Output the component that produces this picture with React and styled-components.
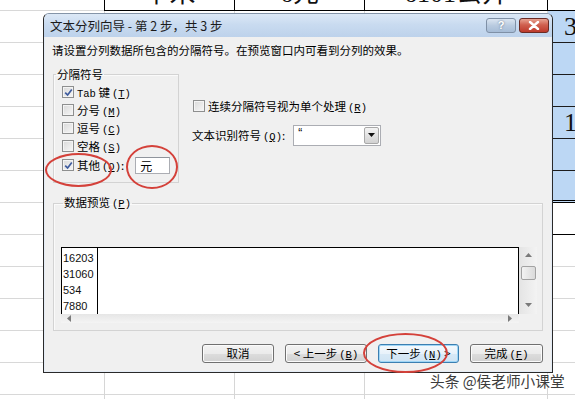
import React from 'react';
import styled, { createGlobalStyle } from 'styled-components';

const UI = '"Noto Sans CJK SC", "Liberation Sans", sans-serif';
const SERIF = '"Liberation Serif", "Noto Sans CJK SC", serif';
const MONO = '"Liberation Mono", "DejaVu Sans Mono", monospace';

const GlobalStyle = createGlobalStyle`
  html, body { margin: 0; padding: 0; background: #fff; }
  body { font-family: ${UI}; }
`;

const sheetCols = [
  { w: 105 },
  { w: 130, text: '平米' },
  { w: 130, text: '6元' },
  { w: 183, text: '6101公开' },
];

const previewRows = ['16203', '31060', '534', '7880'];

const delimiters = [
  { latin: 'Tab', label: ' 键', key: 'T', checked: true },
  { label: '分号', key: 'M' },
  { label: '逗号', key: 'C' },
  { label: '空格', key: 'S' },
];

// access key in parentheses, SimSun-like half width
const Key = ({ k }) => (
  <KeyText>(<u>{k}</u>)</KeyText>
);

const Check = ({ checked }) => (
  <Box>
    {checked && (
      <svg width="9" height="9" viewBox="0 0 9 9">
        <path d="M1.2 4.6 L3.6 7 L7.8 1.4" fill="none" stroke="#3f5c9e" strokeWidth="1.7" />
      </svg>
    )}
  </Box>
);

const Arrow = ({ dir, color = '#7a7a7a' }) => {
  const horiz = dir === 'left' || dir === 'right';
  const pts = {
    up: '0,4 3.5,0 7,4',
    down: '0,0 3.5,4 7,0',
    left: '4,0 0,3.5 4,7',
    right: '0,0 4,3.5 0,7',
  }[dir];
  return (
    <svg width={horiz ? 4 : 7} height={horiz ? 7 : 4}>
      <polygon points={pts} fill={color} />
    </svg>
  );
};

const App = () => (
  <Sheet>
    <GlobalStyle />
    {sheetCols.map((c, i) => (
      <Col key={i} $w={c.w}>
        <Cap $table={!!c.text}>{c.text && <CapText>{c.text}</CapText>}</Cap>
      </Col>
    ))}
    <Col>
      <Cap $table />
      {[0, 1, 2, 3, 4, 5].map((r) => (
        <BlueCell key={r} $last={r === 5}>{r === 0 ? '3' : r === 3 ? '1' : ''}</BlueCell>
      ))}
      <WhiteCell />
    </Col>

    <Dialog>
      <TitleBar>
        <Title>文本分列向导 - 第 2 步，共 3 步</Title>
        <CaptionButtons>
          <HelpButton>?</HelpButton>
          <CloseButton>
            <svg width="12" height="9" viewBox="0 0 12 9">
              <path d="M2 1 L10 8 M10 1 L2 8" stroke="#fff" strokeWidth="2.4" strokeLinecap="round" />
            </svg>
          </CloseButton>
        </CaptionButtons>
      </TitleBar>

      <Body>
        <Instruction>请设置分列数据所包含的分隔符号。在预览窗口内可看到分列的效果。</Instruction>

        <OptionsRow>
          <DelimGroup>
            <Legend>分隔符号</Legend>
            <GroupInner>
              {delimiters.map((d) => (
                <CheckRow key={d.key}>
                  <Check checked={d.checked} />
                  <span>{d.latin && <Latin>{d.latin}</Latin>}{d.label}<Key k={d.key} /></span>
                </CheckRow>
              ))}
              <CheckRow $tall>
                <Check checked />
                <span>其他<Key k="O" />:</span>
                <TextField>元</TextField>
              </CheckRow>
            </GroupInner>
          </DelimGroup>

          <SideOptions>
            <CheckRow>
              <Check />
              <span>连续分隔符号视为单个处理<Key k="R" /></span>
            </CheckRow>
            <QualifierRow>
              <span>文本识别符号<Key k="Q" />:</span>
              <Combo>
                <ComboValue>“</ComboValue>
                <ComboButton><Arrow dir="down" color="#111" /></ComboButton>
              </Combo>
            </QualifierRow>
          </SideOptions>
        </OptionsRow>

        <PreviewGroup>
          <Legend>数据预览<Key k="P" /></Legend>
          <PreviewFrame>
            <PreviewTop>
              <DataGrid>
                <DataCol>
                  {previewRows.map((v) => (
                    <DataCell key={v}>{v}</DataCell>
                  ))}
                </DataCol>
              </DataGrid>
              <VScroll>
                <ArrowCell><Arrow dir="up" /></ArrowCell>
                <Thumb />
                <ArrowCell $end><Arrow dir="down" /></ArrowCell>
              </VScroll>
            </PreviewTop>
            <PreviewBottom>
              <HScroll>
                <Arrow dir="left" />
                <Arrow dir="right" />
              </HScroll>
              <Corner />
            </PreviewBottom>
          </PreviewFrame>
        </PreviewGroup>

        <ButtonRow>
          <Button $w={72}>取消</Button>
          <Button $w={82}>&lt; 上一步<Key k="B" /></Button>
          <Button $w={81} $default>下一步<Key k="N" /> &gt;</Button>
          <Button $w={73}>完成<Key k="F" /></Button>
        </ButtonRow>
      </Body>
    </Dialog>

    <Ring $x={45} $y={153} $w={67} $h={34} />
    <Ring $x={126} $y={145} $w={52} $h={44} />
    <Ring $x={363} $y={333} $w={85} $h={40} />

    <Watermark>头条 @侯老师小课堂</Watermark>
  </Sheet>
);

const Sheet = styled.div`
  position: relative;
  width: 575px;
  height: 399px;
  overflow: hidden;
  display: flex;
  background: #fff;
`;

const Col = styled.div`
  box-sizing: border-box;
  flex: ${(p) => (p.$w ? `0 0 ${p.$w}px` : '1 1 auto')};
  height: 100%;
  border-right: 1px solid #d6d6d6;
  display: flex;
  flex-direction: column;
  background: repeating-linear-gradient(to bottom, transparent 0 31px, #d8d8d8 31px 32px);
  background-position: 0 11px;
`;

const Cap = styled.div`
  box-sizing: border-box;
  height: 11px;
  flex: none;
  overflow: hidden;
  background: #fff;
  border-bottom: 1px solid ${(p) => (p.$table ? '#000' : '#d8d8d8')};
  border-left: ${(p) => (p.$table ? '1px solid #000' : 'none')};
  margin-left: ${(p) => (p.$table ? '-1px' : '0')};
  text-align: center;
`;

const CapText = styled.span`
  display: block;
  margin-top: -19px;
  font: 26px/26px ${SERIF};
  color: #111;
`;

const BlueCell = styled.div`
  box-sizing: border-box;
  height: 32px;
  flex: none;
  background: #bcd7f4;
  border-bottom: ${(p) => (p.$last ? '3px double #000' : '1px solid #1c1c1c')};
  padding-left: 16px;
  font: 26px/32px ${SERIF};
  color: #111;
`;

const WhiteCell = styled.div`
  box-sizing: border-box;
  height: 32px;
  flex: none;
  background: #fff;
  border-bottom: 1px solid #000;
`;

const Dialog = styled.div`
  position: absolute;
  left: 43px;
  top: 13px;
  width: 510px;
  height: 360px;
  box-sizing: border-box;
  border: 1px solid #2a2a2a;
  border-top-color: #8494a8;
  border-radius: 6px 6px 0 0;
  background: #f0f0f0;
  box-shadow: inset 0 0 0 1px #e4ecf6;
  display: flex;
  flex-direction: column;
  font-family: ${UI};
  font-size: 11.5px;
  color: #000;
  overflow: hidden;
`;

const TitleBar = styled.div`
  height: 23px;
  flex: none;
  display: flex;
  align-items: flex-start;
  justify-content: space-between;
  padding: 0 3px 0 6px;
  background: linear-gradient(#dce8f6, #c9dbf0 45%, #bdd2eb);
  border-radius: 5px 5px 0 0;
`;

const Title = styled.span`
  font-size: 12.5px;
  line-height: 23px;
  color: #1b1b1b;
`;

const CaptionButtons = styled.div`
  display: flex;
  gap: 3px;
  padding-top: 4px;
`;

const CaptionButton = styled.div`
  width: 30px;
  height: 15px;
  box-sizing: border-box;
  border-radius: 3px;
  display: flex;
  align-items: center;
  justify-content: center;
`;

const HelpButton = styled(CaptionButton)`
  border: 1px solid #7f90a6;
  background: linear-gradient(#dbe5f1, #b9cbe0 50%, #a6bcd6);
  color: #fff;
  font: bold 11px/13px "Liberation Sans", sans-serif;
  text-shadow: 0 0 2px #55657a;
`;

const CloseButton = styled(CaptionButton)`
  border: 1px solid #6b2b24;
  background: linear-gradient(#e8a392, #d0604f 45%, #bd3a2c);
`;

const Body = styled.div`
  flex: 1;
  display: flex;
  flex-direction: column;
  padding: 6px 9px 0 9px;
`;

const Instruction = styled.div`
  line-height: 14px;
  margin-left: -1px;
`;

const Latin = styled.span`
  font-family: ${MONO};
  font-size: 10.5px;
`;

const KeyText = styled.span`
  font-family: ${MONO};
  font-size: 10.5px;
  margin-left: 2px;
`;

const OptionsRow = styled.div`
  display: flex;
  align-items: flex-start;
  margin-top: 10px;
`;

const Group = styled.fieldset`
  margin: 0;
  padding: 0;
  min-width: 0;
  box-sizing: border-box;
  border: 1px solid #d3d3d3;
  box-shadow: inset 1px 1px 0 #fafafa;
`;

const Legend = styled.legend`
  padding: 0 1px;
  margin-left: 2px;
  line-height: 14px;
`;

const DelimGroup = styled(Group)`
  width: 126px;
  flex: none;
`;

const GroupInner = styled.div`
  padding: 2px 0 7px 8px;
`;

const CheckRow = styled.div`
  height: ${(p) => (p.$tall ? '20px' : '18px')};
  display: flex;
  align-items: center;
  gap: 3px;
  white-space: nowrap;
`;

const Box = styled.span`
  width: 12px;
  height: 12px;
  box-sizing: border-box;
  flex: none;
  border: 1px solid #8e8f8f;
  background: linear-gradient(135deg, #d9d9d9, #f7f7f7);
  box-shadow: inset 0 0 0 1px #f4f4f4;
  display: inline-flex;
  align-items: center;
  justify-content: center;
`;

const TextField = styled.span`
  width: 35px;
  height: 17px;
  box-sizing: border-box;
  margin-left: 8px;
  border: 1px solid #abadb3;
  border-top-color: #8f949c;
  background: #fff;
  padding-left: 4px;
  font-size: 12px;
  line-height: 15px;
`;

const SideOptions = styled.div`
  margin-left: 14px;
  padding-top: 30px;
  display: flex;
  flex-direction: column;
  gap: 9px;
`;

const QualifierRow = styled.div`
  display: flex;
  align-items: center;
  height: 22px;
  margin-left: -1px;
`;

const Combo = styled.div`
  width: 88px;
  height: 21px;
  box-sizing: border-box;
  margin-left: 8px;
  border: 1px solid #abadb3;
  background: #fff;
  display: flex;
  justify-content: space-between;
`;

const ComboValue = styled.span`
  padding-left: 4px;
  font: 12px/14px "Liberation Sans", sans-serif;
`;

const ComboButton = styled.span`
  width: 15px;
  margin: 1px;
  box-sizing: border-box;
  border: 1px solid #a8a8a8;
  border-radius: 2px;
  background: linear-gradient(#f4f4f4, #e2e2e2 50%, #d2d2d2);
  display: flex;
  align-items: center;
  justify-content: center;
`;

const PreviewGroup = styled(Group)`
  width: 490px;
  margin-top: 12px;
  padding: 36px 0 7px 7px;
`;

const PreviewFrame = styled.div`
  width: 476px;
  height: 76px;
  display: flex;
  flex-direction: column;
`;

const PreviewTop = styled.div`
  flex: 1;
  display: flex;
`;

const DataGrid = styled.div`
  flex: 1;
  box-sizing: border-box;
  background: #fff;
  border: 1px solid #000;
  border-bottom: none;
  display: flex;
  overflow: hidden;
`;

const DataCol = styled.div`
  width: 36px;
  box-sizing: border-box;
  border-right: 1px solid #000;
  padding: 2px 0 0 1px;
`;

const DataCell = styled.div`
  font: 11px/16px "Liberation Sans", sans-serif;
  color: #111;
`;

const VScroll = styled.div`
  width: 18px;
  display: flex;
  flex-direction: column;
  align-items: center;
  background: linear-gradient(to right, #e4e4e4, #f3f3f3);
`;

const ArrowCell = styled.div`
  height: 16px;
  display: flex;
  align-items: center;
  justify-content: center;
  margin-top: ${(p) => (p.$end ? 'auto' : '0')};
  padding-bottom: ${(p) => (p.$end ? '1px' : '0')};
`;

const Thumb = styled.div`
  width: 15px;
  height: 14px;
  margin-top: 3px;
  box-sizing: border-box;
  border: 1px solid #a2a2a2;
  border-radius: 2px;
  background: linear-gradient(to right, #f3f3f3, #dadada);
`;

const PreviewBottom = styled.div`
  height: 12px;
  display: flex;
`;

const HScroll = styled.div`
  flex: 1;
  display: flex;
  align-items: center;
  justify-content: space-between;
  padding: 0 7px 0 6px;
  background: linear-gradient(#e6e6e6, #f4f4f4);
`;

const Corner = styled.div`
  width: 18px;
  background: #f0f0f0;
`;

const ButtonRow = styled.div`
  display: flex;
  justify-content: flex-end;
  gap: 11px;
  margin-top: 13px;
`;

const Button = styled.div`
  width: ${(p) => p.$w}px;
  height: 19px;
  box-sizing: border-box;
  border: 1px solid ${(p) => (p.$default ? '#3c7fb1' : '#707070')};
  border-radius: 3px;
  background: ${(p) =>
    p.$default
      ? 'linear-gradient(#f4f9fd, #e8f2fa 50%, #d8e9f6 51%, #cfe4f4)'
      : 'linear-gradient(#f3f3f3, #ebebeb 50%, #dddddd 51%, #d1d1d1)'};
  box-shadow: inset 0 0 0 1px ${(p) => (p.$default ? '#9fd6f6' : '#fbfbfb')};
  line-height: 17px;
  text-align: center;
  white-space: nowrap;
`;

const Ring = styled.div`
  position: absolute;
  left: ${(p) => p.$x}px;
  top: ${(p) => p.$y}px;
  width: ${(p) => p.$w}px;
  height: ${(p) => p.$h}px;
  box-sizing: border-box;
  border: 2px solid #d4413a;
  border-radius: 50%;
`;

const Watermark = styled.div`
  position: absolute;
  left: 430px;
  top: 371px;
  font: 14.7px/20px ${UI};
  color: #3c3c3c;
  text-shadow: 0 0 2px #fff, 0 0 2px #fff;
  white-space: nowrap;
`;

export default App;
